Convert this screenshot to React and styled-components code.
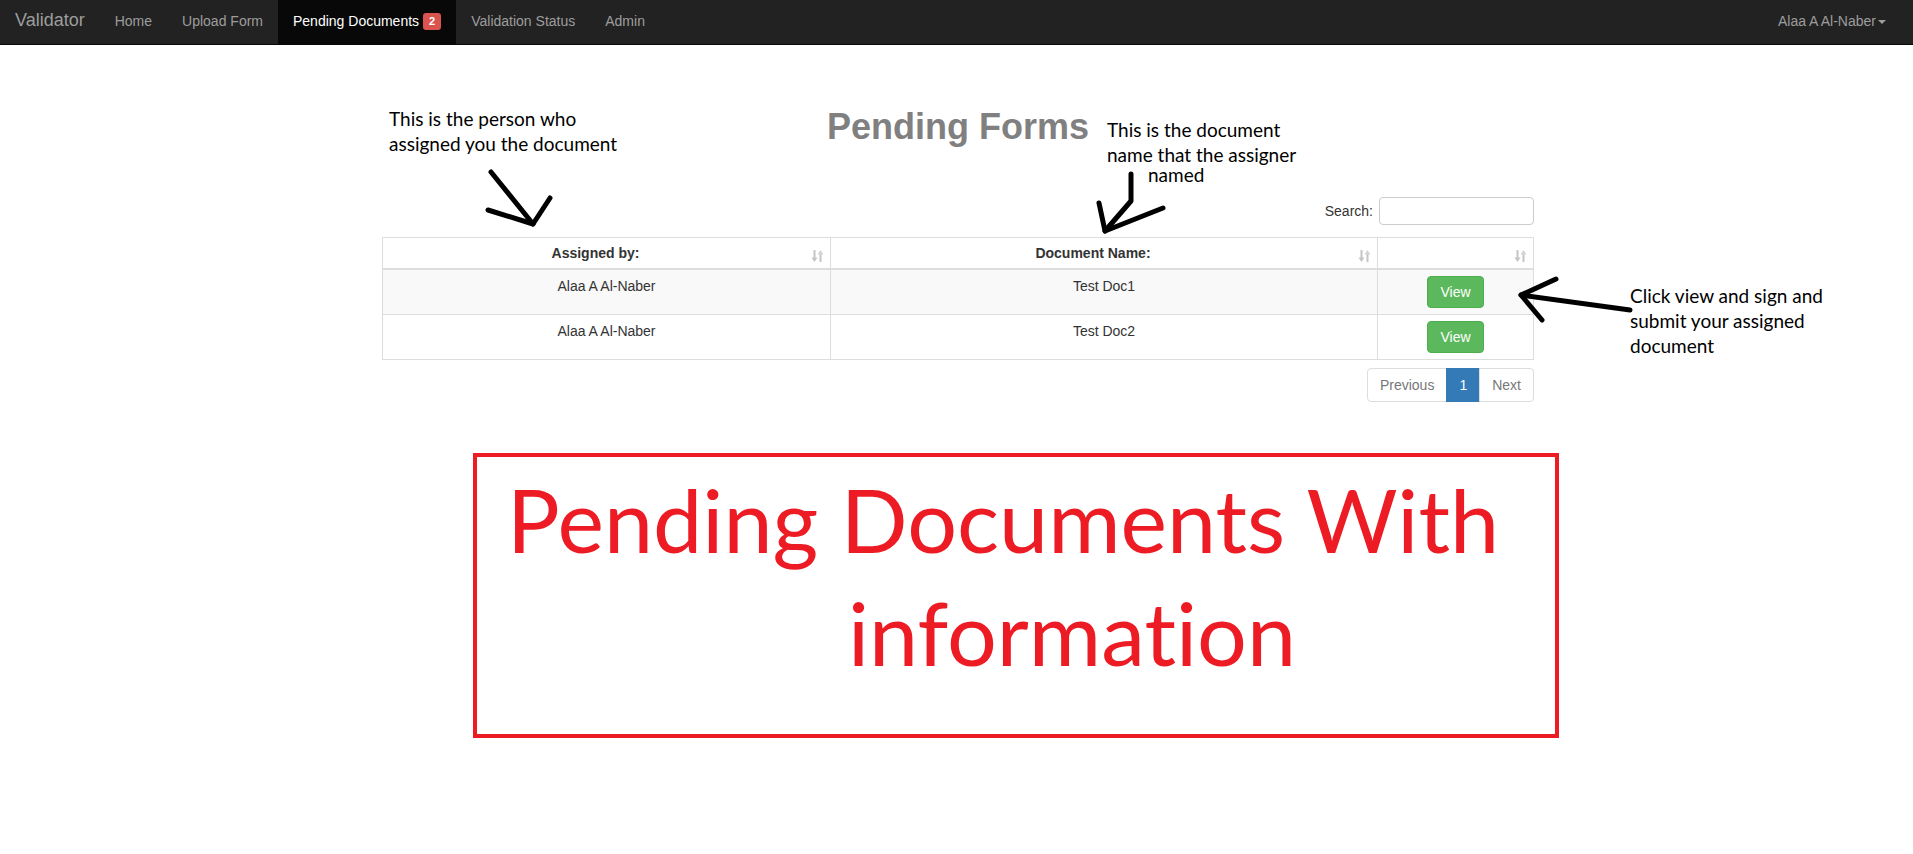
import React from "react";
import styled, { createGlobalStyle } from "styled-components";

const GlobalStyle = createGlobalStyle`
  html, body { margin: 0; padding: 0; background: #fff; }
  body {
    font-family: "Liberation Sans", Arial, sans-serif;
    font-size: 14px;
    color: #333;
  }
  * { box-sizing: border-box; }
`;

const Root = styled.div`
  position: relative;
  width: 1913px;
  min-height: 854px;
`;

const Navbar = styled.nav`
  display: flex;
  align-items: stretch;
  height: 45px;
  background: #222;
  border-bottom: 1px solid #080808;
`;

const Brand = styled.a`
  display: block;
  padding: 10px 15px 14px;
  font-size: 18px;
  line-height: 20px;
  color: #9d9d9d;
  text-decoration: none;
`;

const NavList = styled.ul`
  display: flex;
  margin: 0;
  padding: 0;
  list-style: none;
`;

const NavItem = styled.li`
  display: flex;
  align-items: flex-start;
  padding: 11px 15px 13px;
  line-height: 20px;
  font-size: 14px;
  color: ${(p) => (p.$active ? "#fff" : "#9d9d9d")};
  background: ${(p) => (p.$active ? "#080808" : "transparent")};
  white-space: pre;
`;

const Badge = styled.span`
  display: inline-block;
  margin-left: 4px;
  margin-top: 2px;
  padding: 3px 6px 3px;
  font-size: 11px;
  font-weight: bold;
  line-height: 11px;
  color: #fff;
  background: #d9534f;
  border-radius: 3px;
`;

const NavRight = styled.div`
  margin-left: auto;
  display: flex;
  align-items: flex-start;
  padding: 11px 27px 13px 15px;
  line-height: 20px;
  color: #9d9d9d;
`;

const Caret = styled.span`
  display: inline-block;
  width: 0;
  height: 0;
  margin-left: 2px;
  margin-top: 9px;
  border-top: 4px solid #9d9d9d;
  border-left: 4px solid transparent;
  border-right: 4px solid transparent;
`;

const Container = styled.main`
  width: 1152px;
  margin: 0 0 0 382px;
  padding-top: 62px;
`;

const Title = styled.h1`
  margin: 0;
  text-align: center;
  font-size: 36px;
  font-weight: bold;
  line-height: 40px;
  color: #808080;
`;

const SearchBar = styled.div`
  display: flex;
  justify-content: flex-end;
  align-items: center;
  gap: 6px;
  margin-top: 50px;
  line-height: 20px;
`;

const SearchInput = styled.input`
  width: 155px;
  height: 28px;
  border: 1px solid #ccc;
  border-radius: 4px;
  padding: 4px 8px;
  font: inherit;
  outline: none;
`;

const Table = styled.table`
  width: 100%;
  margin-top: 12px;
  border-collapse: separate;
  border-spacing: 0;
  border-top: 1px solid #ddd;
  border-left: 1px solid #ddd;
  table-layout: fixed;
`;

const Th = styled.th`
  position: relative;
  padding: 5px 30px 5px 8px;
  line-height: 20px;
  font-weight: bold;
  text-align: center;
  border-right: 1px solid #ddd;
  border-bottom: 2px solid #ddd;
`;

const SortIcon = styled.svg`
  position: absolute;
  right: 6px;
  top: 11px;
`;

const Tr = styled.tr`
  background: ${(p) => (p.$striped ? "#f9f9f9" : "#fff")};
`;

const Td = styled.td`
  padding: 6px 8px;
  line-height: 20px;
  text-align: center;
  vertical-align: top;
  border-right: 1px solid #ddd;
  border-bottom: 1px solid #ddd;
`;

const ViewButton = styled.button`
  padding: 6px 12px;
  font-family: inherit;
  font-size: 14px;
  line-height: 18px;
  color: #fff;
  background: #5cb85c;
  border: 1px solid #4cae4c;
  border-radius: 4px;
`;

const Pagination = styled.div`
  display: flex;
  justify-content: flex-end;
  margin-top: 8px;
`;

const PageItem = styled.span`
  padding: 6px 12px;
  line-height: 20px;
  margin-left: -1px;
  border: 1px solid ${(p) => (p.$active ? "#337ab7" : "#ddd")};
  background: ${(p) => (p.$active ? "#337ab7" : "#fff")};
  color: ${(p) => (p.$active ? "#fff" : "#777")};
  &:first-child { border-radius: 4px 0 0 4px; margin-left: 0; }
  &:last-child { border-radius: 0 4px 4px 0; }
`;

const RedBox = styled.section`
  width: 1086px;
  height: 285px;
  margin: 51px 0 0 473px;
  border: 4px solid #ed1c24;
  padding: 6px 0 0 30px;
`;

const RedLine = styled.div`
  font-family: Lato, "Open Sans", sans-serif;
  font-size: 88px;
  line-height: 113px;
  color: #ed1c24;
  white-space: nowrap;
  font-variant-ligatures: none;
  font-feature-settings: "liga" 0, "clig" 0;
  padding-left: ${(p) => p.$indent || 0}px;
`;

const Note = styled.div`
  position: absolute;
  top: ${(p) => p.$top}px;
  left: ${(p) => p.$left}px;
  font-family: Lato, "Open Sans", sans-serif;
  font-size: 19px;
  line-height: 25px;
  color: #000;
  white-space: nowrap;
  font-variant-ligatures: none;
`;

const NoteLine = styled.div`
  padding-left: ${(p) => p.$indent || 0}px;
  margin-top: ${(p) => p.$shift || 0}px;
`;

const Overlay = styled.svg`
  position: absolute;
  top: 0;
  left: 0;
  pointer-events: none;
`;

function Sort() {
  return (
    <SortIcon width="13" height="14" viewBox="0 0 13 14">
      <g fill="none" stroke="#c4c4c4" strokeWidth="2">
        <path d="M3.5 1 V10" />
        <path d="M9.5 13 V4" />
      </g>
      <path d="M0.5 8.5 L3.5 13 L6.5 8.5 Z" fill="#c4c4c4" />
      <path d="M6.5 5.5 L9.5 1 L12.5 5.5 Z" fill="#d4d4d4" />
    </SortIcon>
  );
}

const rows = [
  { by: "Alaa A Al-Naber", doc: "Test Doc1" },
  { by: "Alaa A Al-Naber", doc: "Test Doc2" },
];

export default function App() {
  return (
    <Root>
      <GlobalStyle />
      <Navbar>
        <Brand>Validator</Brand>
        <NavList>
          <NavItem>Home</NavItem>
          <NavItem>Upload Form</NavItem>
          <NavItem $active>
            Pending Documents<Badge>2</Badge>
          </NavItem>
          <NavItem>Validation Status</NavItem>
          <NavItem>Admin</NavItem>
        </NavList>
        <NavRight>
          Alaa A Al-Naber<Caret />
        </NavRight>
      </Navbar>

      <Container>
        <Title>Pending Forms</Title>
        <SearchBar>
          <label>Search:</label>
          <SearchInput type="text" />
        </SearchBar>
        <Table>
          <colgroup>
            <col style={{ width: "448px" }} />
            <col style={{ width: "547px" }} />
            <col style={{ width: "156px" }} />
          </colgroup>
          <thead>
            <tr>
              <Th>
                Assigned by:
                <Sort />
              </Th>
              <Th>
                Document Name:
                <Sort />
              </Th>
              <Th>
                <Sort />
              </Th>
            </tr>
          </thead>
          <tbody>
            {rows.map((r, i) => (
              <Tr key={i} $striped={i % 2 === 0}>
                <Td>{r.by}</Td>
                <Td>{r.doc}</Td>
                <Td>
                  <ViewButton>View</ViewButton>
                </Td>
              </Tr>
            ))}
          </tbody>
        </Table>
        <Pagination>
          <PageItem>Previous</PageItem>
          <PageItem $active>1</PageItem>
          <PageItem>Next</PageItem>
        </Pagination>
      </Container>

      <RedBox>
        <RedLine>Pending Documents With</RedLine>
        <RedLine $indent={341}>information</RedLine>
      </RedBox>

      <Note $top={106} $left={389}>
        <NoteLine>This is the person who</NoteLine>
        <NoteLine>assigned you the document</NoteLine>
      </Note>
      <Note $top={117} $left={1107}>
        <NoteLine>This is the document</NoteLine>
        <NoteLine>name that the assigner</NoteLine>
        <NoteLine $indent={41} $shift={-5}>named</NoteLine>
      </Note>
      <Note $top={283} $left={1630}>
        <NoteLine>Click view and sign and</NoteLine>
        <NoteLine>submit your assigned</NoteLine>
        <NoteLine>document</NoteLine>
      </Note>

      <Overlay width="1913" height="854" viewBox="0 0 1913 854">
        <g fill="none" stroke="#000" strokeWidth="5" strokeLinecap="round" strokeLinejoin="round">
          <path d="M491 172 L533 224" />
          <path d="M488 210 L533 224 L550 198" />
          <path d="M1131 174 L1131 201 L1105 231" />
          <path d="M1099 203 L1105 231 L1163 208" />
          <path d="M1630 310 L1521 295" />
          <path d="M1556 279 L1521 295 L1542 320" />
        </g>
      </Overlay>
    </Root>
  );
}
